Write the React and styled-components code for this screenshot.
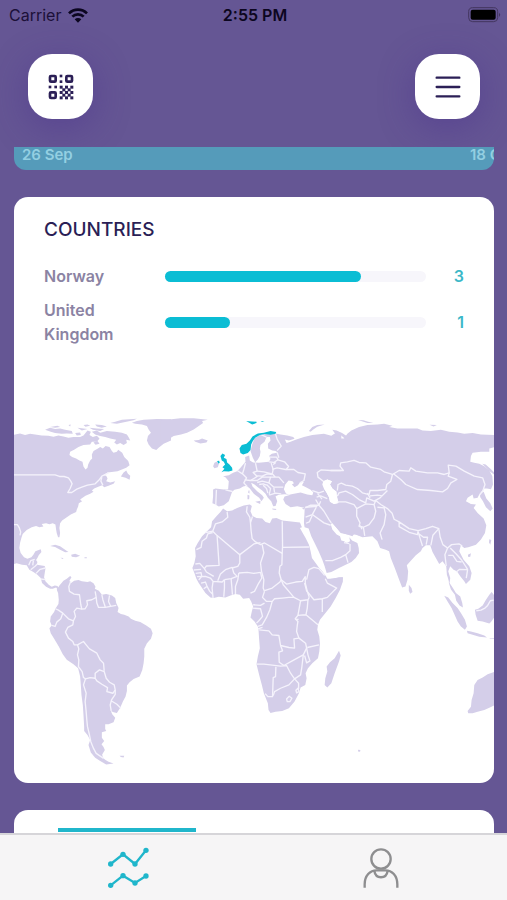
import styled, { createGlobalStyle } from 'styled-components';

const accent = '#0bbdd4';
const dark = '#2b1f56';
const muted = '#8b83a3';
const land = '#d4cee9';
const font = `Inter, 'Liberation Sans', sans-serif`;

const countries = [
  { name: 'Norway', visits: 3, share: 75 },
  { name: 'United Kingdom', visits: 1, share: 25 },
];

const regions = [
  {
    name: 'north-america',
    shift: 'translate(-42 0)',
    shapes: [
      'M42,101 60,97 75,102 90,98 105,100 125,103 145,104 160,107 175,103 190,106 205,110 220,108 240,108 250,103 262,88 272,92 268,102 278,108 290,104 298,112 290,122 275,122 270,130 250,132 235,138 222,146 210,152 208,162 216,168 228,172 238,178 247,182 250,196 256,205 262,200 264,190 270,178 276,172 275,160 280,150 292,143 300,138 308,142 316,135 328,138 335,150 340,155 350,152 354,146 366,155 372,168 384,180 388,192 378,200 365,205 352,210 340,212 322,214 310,222 318,224 322,232 318,240 330,244 345,240 340,248 325,254 312,258 306,252 296,256 282,262 275,268 280,272 270,278 256,284 244,292 240,296 246,300 236,306 234,316 230,325 228,332 212,340 200,348 186,358 180,366 178,380 180,395 178,408 174,408 170,396 168,385 166,370 158,366 148,369 138,366 125,368 130,376 118,378 108,374 95,378 80,386 68,398 64,410 60,425 58,440 62,455 72,468 82,472 94,468 100,460 106,450 122,444 124,452 116,462 112,470 108,476 112,482 110,490 120,492 134,494 136,502 134,515 132,528 136,540 146,550 155,556 164,552 172,554 180,566 176,568 168,558 158,562 150,562 138,556 126,545 122,530 112,520 100,512 88,505 80,492 66,490 50,486 42,488Z',
      'M395,65 410,60 430,56 470,54 512,55 512,118 490,128 475,140 468,147 455,142 445,130 440,118 443,105 452,95 445,85 440,75 425,70 405,68Z',
      'M275,92 290,88 300,95 320,90 345,92 365,95 380,100 386,110 390,118 378,116 380,126 370,132 360,126 350,130 342,124 348,116 330,112 315,108 300,105 285,100Z',
      'M135,86 150,80 165,84 180,82 195,86 215,90 218,98 200,97 185,98 165,96 152,92Z',
      'M150,78 172,74 180,78 165,80Z M205,72 212,70 210,76Z',
      'M225,96 240,94 242,102 230,103Z M232,80 250,82 262,84 245,88Z',
      'M250,72 262,70 270,74 256,77Z M268,80 290,82 312,84 300,90 278,86Z',
      'M285,70 305,72 320,76 305,80 290,76Z M330,66 345,62 365,56 410,53 400,58 375,63 350,68Z',
      'M280,124 292,120 298,128 286,131Z',
      'M362,226 370,214 378,208 383,218 390,224 388,236 376,230Z',
      'M150,434 165,430 180,435 195,445 205,452 195,453 180,445 165,437Z',
      'M213,460 225,457 240,463 228,468 215,466Z M253,468 260,468 260,471 253,471Z M181,469 190,470 188,473Z',
    ],
    borders: [
      'M42,221 165,221 178,226 192,226 205,230 212,240 216,248 210,262 203,274 215,274 230,264 245,258 262,252 285,248 298,235 305,225 325,215',
      'M305,228 302,240 308,252',
      'M42,370 52,370 58,380 62,392 60,402',
      'M86,492 92,478 104,474 M92,505 105,495 112,488 M108,516 120,504 136,500 M122,533 136,535 M100,478 98,492',
    ],
  },
  {
    name: 'south-america',
    shift: 'translate(-42 480)',
    shapes: [
      'M170,85 178,72 190,58 200,52 210,44 214,48 208,58 212,66 222,58 235,56 245,60 262,62 270,60 280,66 286,76 284,82 296,88 305,100 318,98 335,102 345,110 348,125 355,140 352,152 362,158 372,160 385,165 392,172 405,178 420,182 438,192 452,202 457,215 452,232 440,245 432,262 432,285 430,305 426,325 418,345 400,352 388,362 380,372 380,388 376,405 368,420 360,438 350,454 340,452 332,448 336,458 345,468 340,482 325,488 315,488 315,502 318,508 305,512 305,528 312,538 304,548 310,556 314,565 306,578 308,588 315,594 325,600 340,605 318,608 300,598 285,588 272,572 265,550 270,535 262,520 252,508 252,495 250,460 248,430 244,400 242,370 240,345 234,320 220,308 200,295 188,278 176,255 164,235 152,215 148,200 155,192 150,180 152,165 162,152 166,142 175,128 176,115 174,95Z',
      'M358,582 372,582 370,587 362,586Z',
    ],
    borders: [
      'M212,60 206,75 208,90 222,98 238,100 240,115 242,130 245,143 255,142 262,130 260,118 275,115 288,108 285,90',
      'M245,143 230,140 222,150 226,165 220,178 205,172 188,155 175,146 166,142',
      'M188,155 182,172 170,182 165,195 155,192',
      'M220,178 218,190 203,198 196,212 205,230 218,240 222,250 232,250 250,240 258,250 268,262 290,275 300,295 310,305 312,328',
      'M232,250 236,262 232,280 236,295 235,315 246,330 250,348 256,352 270,348 285,350',
      'M285,350 285,335 298,325 312,330 318,350 328,362 342,370 345,385 338,395 320,390 322,378 305,368 290,358Z',
      'M345,385 345,398 334,415 330,430 333,448 M334,418 350,428 362,440',
      'M256,352 250,370 258,395 255,420 258,450 260,475 262,495 268,520 272,540 280,560 288,575 310,590',
      'M288,108 290,125 295,138 315,138 348,132 M305,100 308,115 315,136 M328,102 325,120 332,136',
    ],
  },
  {
    name: 'africa',
    shift: 'translate(498 270)',
    shapes: [
      'M128,52 140,60 155,58 170,50 190,43 208,40 214,44 210,60 216,74 228,80 245,82 255,92 268,96 275,82 288,80 305,88 325,90 345,92 358,94 364,108 358,110 368,128 375,140 385,160 390,180 394,200 405,215 414,228 425,240 436,255 440,262 455,262 475,258 487,258 485,275 478,295 465,320 450,345 432,368 418,385 412,400 410,415 416,435 418,455 416,480 412,500 395,515 382,530 375,545 378,560 374,580 360,588 355,605 342,630 325,650 305,658 285,660 270,664 264,655 262,635 250,605 244,580 236,550 228,518 232,495 238,470 236,445 234,415 232,405 222,390 210,378 214,360 218,345 212,330 206,320 188,322 178,310 165,308 150,312 135,318 115,316 100,320 90,318 75,305 65,290 55,275 48,262 42,245 36,230 42,215 46,195 44,170 52,155 65,135 80,120 92,108 95,90 108,75 120,62Z',
      'M475,478 480,492 475,510 462,545 452,575 440,588 432,580 434,560 440,540 438,525 448,512 462,500Z',
      'M372,45 372,75 370,95 372,108 384,112 392,135 402,155 414,180 425,205 432,225 438,245 452,242 475,230 495,220 512,212 525,200 535,185 534,170 530,155 514,148 506,138 508,150 498,155 490,150 482,148 478,135 468,130 455,115 450,98 455,95 468,110 480,125 500,130 515,135 520,128 542,135 542,30 440,30Z',
    ],
    borders: [
      'M140,62 142,78 125,92 105,98 97,120 110,133 178,190 220,158 240,154',
      'M97,120 74,124 M97,124 82,128 78,140 65,150 62,168 48,175',
      'M110,133 116,222 78,224 72,232 58,216 45,218 M72,232 78,242 100,255',
      'M200,45 198,62 208,78 210,95 216,76 M210,95 212,120 215,142 225,152 240,160 252,155 305,186 306,165 305,90',
      'M306,168 385,167 M305,186 304,220 298,225 296,245 302,265',
      'M245,160 250,185 240,215 243,240 250,265 248,290 252,300',
      'M178,190 178,215 172,225 155,230 M175,245 200,243 220,246 240,243 244,260 232,280 222,300 210,305',
      'M175,245 172,265 165,285 165,308 M152,262 154,285 156,310 M132,265 132,290 130,316',
      'M112,268 120,248 135,235 155,228 160,245 170,255 152,262 132,265',
      'M98,320 95,290 98,270 125,272 132,265 M98,270 90,260 75,255 50,256 M62,275 75,272 80,285 70,292 M80,285 88,300 96,308',
      'M40,236 62,234 M46,246 62,244 64,255 55,266',
      'M252,298 275,290 298,272 302,265 308,280 325,300 340,318',
      'M252,300 246,318 258,330 275,330 282,322 305,320 325,318 340,318 360,328 382,325 386,318',
      'M218,340 240,342 252,335 M216,350 240,352 246,375 235,388 228,395',
      'M302,265 318,278 345,272 365,270 374,256 374,275 380,300 386,318',
      'M378,265 385,235 400,228 415,232 432,252 M372,275 378,298 400,325 425,322 440,318 468,290 440,275 434,262 M425,322 425,362',
      'M382,325 380,350 376,370 412,400 M360,328 355,355 352,372 376,370 M352,372 344,382 352,390 350,402 348,420 355,440',
      'M355,440 340,442 342,470 325,468 300,462 295,432 275,430 265,418 236,415',
      'M300,462 306,478 295,482 296,512 310,522 335,508 350,500 368,490 378,470 375,455 355,440',
      'M228,518 250,518 300,524 318,522 330,545 342,562 325,580 300,590 282,600 278,612',
      'M380,468 415,460 M378,470 382,490 388,508 378,514 372,492 M368,490 364,525 360,550 342,562 354,575 354,592',
      'M286,526 285,555 278,558 276,615 262,615 254,606 M275,330 268,355 258,378 245,400 232,405 M232,412 246,408',
      'M318,622 326,614 334,620 328,630 320,630Z M346,596 352,590 355,600 348,604Z M344,384 354,384',
      'M374,48 410,45 M408,46 395,70 375,78 M395,70 430,95 450,102 M405,25 415,42 430,60 445,85 452,95',
      'M434,208 455,208 480,198 495,190 508,178 508,158 M495,190 502,214 M376,96 386,92 395,72 M490,154 506,157',
    ],
  },
  {
    name: 'europe',
    shift: 'translate(438 0)',
    shapes: [
      'M345,97 360,100 380,103 398,108 402,113 385,118 373,115 378,126 390,122 405,116 430,108 455,102 490,98 512,104 530,92 542,100 542,362 430,362 434,320 410,315 390,318 375,308 368,295 372,286 390,281 372,279 355,281 345,285 350,300 345,314 338,315 332,300 322,290 315,278 305,268 292,258 282,250 272,245 276,256 290,270 305,282 310,290 303,300 296,290 280,278 268,262 258,254 248,256 238,262 222,266 215,272 210,286 205,300 190,312 175,316 165,310 156,306 158,285 158,265 165,262 190,265 203,264 205,240 195,228 188,225 205,222 218,215 230,210 240,200 250,188 255,182 254,168 266,163 268,178 278,184 295,185 310,183 325,182 330,174 326,164 334,158 352,154 345,150 335,148 323,142 322,128 330,118 328,108 318,108 312,122 300,132 298,142 300,152 298,165 292,175 284,183 277,170 270,150 275,130 282,112 300,100 320,96Z',
      'M0,58 20,56 60,52 100,52 142,56 125,60 128,66 115,75 100,85 80,95 62,100 40,105 28,112 15,122 0,130Z',
      'M100,118 115,117 125,112 142,118 138,124 120,127 105,122Z',
      'M162,185 170,181 175,190 172,198 162,201 158,195Z',
      'M284,302 300,299 299,308Z M261,281 267,283 266,294 261,294Z M264,268 267,268 267,277 263,275Z M335,322 348,323 345,326 336,325Z M424,322 434,319 430,325Z',
      'M445,90 455,78 470,72 492,70 470,77 458,85 450,92Z',
    ],
    waters: [
      'M374,250 384,238 396,240 400,246 394,250 402,258 412,252 418,244 430,242 424,252 436,258 450,266 458,274 455,282 440,280 420,274 400,278 385,281 376,277 370,264Z',
      'M488,240 500,235 514,240 508,250 515,262 526,272 528,282 532,305 520,308 508,302 505,288 498,275 490,262 485,250Z',
    ],
    borders: [
      'M255,186 250,205 246,218 258,230 250,245 260,256 M285,186 290,210 278,214 290,226 270,238 252,236',
      'M332,186 338,205 335,218 310,212 290,210 M290,224 305,225 320,218 335,220 M270,238 290,238 305,228 330,228 325,245 305,240 290,244',
      'M230,208 246,218 M195,266 216,271 M168,266 166,312',
      'M330,228 355,228 370,245 M325,245 340,258 368,258 M335,205 350,200 375,205 400,205 412,214 434,218 430,238 418,245 M335,218 345,228',
      'M325,182 340,184 352,176 372,182 384,196 376,206 M328,168 348,168 354,178 M350,154 355,170 M338,190 346,184',
      'M345,99 350,115 362,135 350,148 M318,108 300,100 M318,250 330,262 326,280 M308,252 318,262 322,276 M326,282 345,276 362,278 M340,260 342,274 M296,250 308,248 318,252',
      'M455,268 475,275 490,270 M468,288 480,284 500,292 M470,276 484,294 M480,300 475,312 450,312 434,320',
      'M488,240 472,228 470,214 482,206 510,208 540,208',
    ],
    active: [
      'M180,165 186,157 194,162 190,170 198,174 200,184 207,190 215,200 216,208 205,211 190,210 183,213 192,203 186,198 194,190 190,182 184,178Z',
      'M170,180 176,179 178,185 174,188Z',
      'M237,142 244,132 258,128 268,118 276,106 292,97 310,95 330,90 347,93 345,98 330,101 312,99 298,102 284,110 277,120 272,130 270,147 262,156 248,160 240,156Z',
      'M257,60 275,61 288,62 288,66 275,70 266,65Z M300,60 312,61 305,63Z',
    ],
  },
  {
    name: 'asia',
    shift: 'translate(948 0)',
    shapes: [
      'M0,106 20,112 40,112 50,98 62,88 85,78 110,72 140,70 160,68 185,74 175,78 200,82 230,82 260,82 275,88 300,90 330,86 355,92 380,94 400,98 425,96 450,100 492,102 492,138 475,142 475,152 450,152 425,155 420,165 418,182 430,185 445,188 460,195 475,208 484,225 486,250 480,264 468,262 460,262 446,278 440,290 428,292 425,280 410,290 405,300 420,308 435,310 428,320 440,335 458,352 466,372 462,395 450,415 435,430 412,438 400,440 390,432 385,450 398,475 415,495 422,515 418,535 405,548 400,540 388,525 378,510 368,505 358,495 352,510 358,530 356,545 348,520 346,495 335,480 325,488 315,470 305,452 298,432 285,432 275,440 270,450 255,462 240,478 228,492 232,510 230,535 224,555 214,558 205,535 192,500 180,470 175,450 165,445 148,440 140,420 125,405 95,408 75,400 50,400 30,393 5,365 0,362Z',
      'M446,278 458,272 466,292 478,306 485,322 478,330 465,318 456,300 448,288Z',
      'M5,86 18,88 34,96 48,105 42,112 30,102 12,96Z M82,57 98,58 112,62 128,66 110,66Z M296,71 318,72 308,76Z',
      'M454,188 464,190 480,204 492,216 492,222 476,210Z M411,460 420,456 418,466 412,467Z M475,414 481,416 478,430 474,424Z',
      'M0,532 36,528 36,542 20,560 0,566Z',
    ],
    waters: ['M-22,240 -10,235 4,240 -2,250 5,262 18,272 18,282 24,305 10,308 -2,302 -5,288 -12,275 -20,262Z'],
    borders: [
      'M0,208 38,208 28,195 30,185 50,182 70,178 85,184 105,185 120,198 150,205 160,212 185,220 205,208 235,210 240,200 255,210 290,215 320,215 340,220 355,215 352,192 375,195 400,210 430,225 455,230 462,250 456,268 446,282',
      'M188,218 210,235 225,250 260,265 300,268 335,272 350,262 360,245 378,235 352,225 355,215',
      'M20,268 22,250 32,246 45,252 65,255 80,262 95,275 115,280 118,268 140,268 165,265 168,250 180,240 185,220',
      'M20,285 25,275 45,270 65,280 85,295 105,305 108,290 130,300 148,290 170,268 M118,284 140,282 155,284 M110,276 118,290',
      'M20,302 45,302 70,310 78,322 105,308 130,310 135,298 M78,322 78,345 88,365 85,375 98,378 115,370 130,350 135,330 130,310 M98,378 102,404 M86,370 94,384',
      'M140,318 160,320 165,340 160,370 148,395 154,415 M135,298 150,310 170,322 184,336 190,354 205,362',
      'M205,362 235,382 262,388 260,400 235,393 205,376Z M262,388 285,382 305,375 324,382 306,402 300,432',
      'M262,392 268,412 275,434 M265,398 278,408 290,408 286,430 M324,384 328,408 336,430 350,440 342,460 346,494',
      'M350,440 362,430 385,428 394,434 M358,440 376,458 392,476 410,504 M352,462 366,462 378,480 392,482 M376,512 386,504 410,505 406,530',
    ],
  },
  {
    name: 'oceania',
    shift: 'translate(978 480)',
    shapes: [
      'M204,70 212,80 215,92 208,97 204,88Z',
      'M310,103 322,108 335,125 350,140 360,155 372,175 378,195 372,205 360,195 350,180 340,158 332,140 320,120Z',
      'M323,40 326,65 336,80 345,95 358,105 364,125 366,138 356,132 346,118 342,100 330,84 324,66Z',
      'M378,208 390,210 410,215 430,222 438,228 415,226 395,220 380,215Z M446,230 462,230 462,233 446,232Z',
      'M402,145 412,142 425,132 435,115 445,100 452,92 462,105 462,165 450,182 445,186 425,180 410,178 404,160Z',
      'M462,330 440,338 425,348 410,355 400,370 398,395 392,415 390,435 380,448 382,455 395,455 410,450 430,445 445,438 462,430Z',
      'M52,564 59,565 58,570 52,569Z',
    ],
    borders: ['M406,148 420,146 432,140 440,132 448,118 458,116'],
  },
];

const checker = [0, 1, 2, 3, 4].flatMap(row =>
  [0, 1, 2, 3, 4].filter(col => (row + col) % 2 === 0).map(col => ({ row, col }))
);

const WifiIcon = () => (
  <svg width="20" height="15" viewBox="0 0 60 45" aria-hidden="true">
    <g fill="none" stroke="#0c0620" strokeWidth="8">
      <path d="M3 16 C18 1 42 1 57 16" />
      <path d="M13 26 C22 17 38 17 47 26" />
    </g>
    <path d="M30 44 L20 34 C26 29 34 29 40 34 Z" fill="#0c0620" />
  </svg>
);

const BatteryIcon = () => (
  <svg width="33" height="16" viewBox="0 0 99 48" aria-hidden="true">
    <rect x="2" y="2" width="87" height="42" rx="12" fill="none" stroke="#43365f" strokeWidth="3" />
    <rect x="8" y="8" width="75" height="30" rx="6" fill="#000" />
    <path d="M93 17 q7 6 0 13z" fill="#43365f" />
  </svg>
);

const QrIcon = () => (
  <svg width="26" height="26" viewBox="0 0 78 78" fill={dark} aria-hidden="true">
    <g fill="none" stroke={dark} strokeWidth="8">
      <rect x="6" y="6" width="17" height="17" rx="3" />
      <rect x="55" y="6" width="17" height="17" rx="3" />
      <rect x="6" y="55" width="17" height="17" rx="3" />
    </g>
    <rect x="35" y="2" width="8" height="8" />
    <rect x="35" y="19" width="8" height="8" />
    <rect x="2" y="35" width="8" height="8" />
    <rect x="19" y="35" width="8" height="8" />
    {checker.map(({ row, col }) => (
      <rect key={`${row}-${col}`} x={35 + col * 8} y={35 + row * 8} width="9" height="9" />
    ))}
  </svg>
);

const MenuIcon = () => (
  <svg width="26" height="26" viewBox="0 0 78 78" aria-hidden="true">
    <path
      d="M5 11 H73 M5 39 H73 M5 67 H73"
      stroke={dark}
      strokeWidth="7"
      strokeLinecap="round"
    />
  </svg>
);

const ChartsIcon = () => (
  <svg width="42" height="42" viewBox="0 0 126 126" fill="#20b6cb" aria-hidden="true">
    <g fill="none" stroke="#20b6cb" strokeWidth="7">
      <path d="M11 51 L48 22 L84 51 L117 10" />
      <path d="M11 115 L48 86 L84 108 L117 87" />
    </g>
    <circle cx="11" cy="51" r="8" />
    <circle cx="48" cy="22" r="8" />
    <circle cx="84" cy="51" r="8" />
    <circle cx="117" cy="10" r="8" />
    <circle cx="11" cy="115" r="8" />
    <circle cx="48" cy="86" r="8" />
    <circle cx="84" cy="108" r="8" />
    <circle cx="117" cy="87" r="8" />
  </svg>
);

const ProfileIcon = () => (
  <svg width="42" height="42" viewBox="0 0 126 126" aria-hidden="true">
    <g fill="none" stroke="#8e8e90" strokeWidth="7">
      <circle cx="63" cy="36" r="29" />
      <path d="M14 122 V112 C14 86 30 70 50 70 H76 C96 70 112 86 112 112 V122" />
      <path d="M43 72 C47 97 79 97 83 72" />
    </g>
  </svg>
);

const WorldMap = () => (
  <Map viewBox="0 0 1437 1143" role="img" aria-label="Visits by country">
    {regions.map(({ name, shift, shapes }) => (
      <g key={name} transform={shift} fill={land}>
        {shapes.map(d => (
          <path key={d} d={d} />
        ))}
      </g>
    ))}
    {regions.map(({ name, shift, waters = [], borders, active = [] }) => (
      <g key={name} transform={shift}>
        {waters.map(d => (
          <path key={d} d={d} fill="#fff" />
        ))}
        {borders.map(d => (
          <path key={d} d={d} fill="none" stroke="#f5f3fc" strokeWidth="4" strokeLinejoin="round" />
        ))}
        {active.map(d => (
          <path key={d} d={d} fill={accent} />
        ))}
      </g>
    ))}
  </Map>
);

const App = () => {
  return (
    <>
      <GlobalStyle />
      <Screen>
        <StatusBar>
          <Carrier>
            Carrier <WifiIcon />
          </Carrier>
          <Time>2:55 PM</Time>
          <Battery>
            <BatteryIcon />
          </Battery>
        </StatusBar>
        <Header>
          <IconButton type="button" aria-label="QR code">
            <QrIcon />
          </IconButton>
          <IconButton type="button" aria-label="Menu">
            <MenuIcon />
          </IconButton>
        </Header>
        <Content>
          <DateStrip>
            <DateLabel>26 Sep</DateLabel>
            <LastDate>18 Oct</LastDate>
          </DateStrip>
          <Card>
            <Title>COUNTRIES</Title>
            <List>
              {countries.map(({ name, visits, share }) => (
                <Row key={name}>
                  <Name>{name}</Name>
                  <Track>
                    <Fill style={{ width: `${share}%` }} />
                  </Track>
                  <Value>{visits}</Value>
                </Row>
              ))}
            </List>
            <WorldMap />
          </Card>
          <NextCard>
            <Indicator />
          </NextCard>
        </Content>
        <TabBar>
          <Tab type="button" aria-label="Statistics">
            <ChartsIcon />
          </Tab>
          <Tab type="button" aria-label="Profile">
            <ProfileIcon />
          </Tab>
        </TabBar>
      </Screen>
    </>
  );
};

export default App;

const GlobalStyle = createGlobalStyle`
  *,
  *::before,
  *::after {
    box-sizing: border-box;
  }

  body {
    margin: 0;
    font-family: ${font};
    background-color: #655694;
  }

  h2,
  ul {
    margin: 0;
    padding: 0;
    list-style: none;
  }

  svg {
    display: block;
  }
`;

const Screen = styled.div`
  display: flex;
  flex-direction: column;
  height: 100vh;
  overflow: hidden;
  background-color: #655694;
`;

const StatusBar = styled.div`
  display: grid;
  grid-template-columns: 1fr auto 1fr;
  align-items: center;
  height: 30px;
  padding: 0 6px 0 9px;
  font-size: 16px;
  line-height: 20px;
  color: #1c1038;
`;

const Carrier = styled.span`
  display: flex;
  align-items: center;
  gap: 7px;
`;

const Time = styled.span`
  font-weight: 600;
  color: #0c0620;
`;

const Battery = styled.span`
  justify-self: end;
`;

const Header = styled.header`
  display: flex;
  justify-content: space-between;
  padding: 24px 27px 28px 28px;
`;

const IconButton = styled.button`
  display: flex;
  align-items: center;
  justify-content: center;
  width: 65px;
  height: 65px;
  padding: 0;
  border: none;
  border-radius: 24px;
  background-color: #fff;
  box-shadow: 0 8px 36px rgba(70, 45, 140, 0.45);
`;

const Content = styled.main`
  flex: 1;
  min-height: 0;
  padding: 0 13px 0 14px;
  overflow-y: auto;
  scrollbar-width: none;
`;

const DateStrip = styled.div`
  display: flex;
  justify-content: space-between;
  height: 23px;
  padding-left: 8px;
  border-radius: 0 0 12px 12px;
  overflow: hidden;
  background-color: #559bba;
`;

const DateLabel = styled.span`
  font-size: 15px;
  font-weight: 600;
  line-height: 16px;
  color: #93cfe2;
  white-space: nowrap;
`;

const LastDate = styled(DateLabel)`
  width: 24px;
`;

const Card = styled.section`
  margin-top: 27px;
  border-radius: 14px;
  overflow: hidden;
  background-color: #fff;
`;

const Title = styled.h2`
  padding: 21px 30px 0;
  font-size: 19px;
  font-weight: 500;
  line-height: 24px;
  color: ${dark};
`;

const List = styled.ul`
  display: flex;
  flex-direction: column;
  gap: 10px;
  padding: 22px 30px 55px;
`;

const Row = styled.li`
  display: grid;
  grid-template-columns: 121px 1fr 38px;
  align-items: center;
  font-size: 16px;
  font-weight: 600;
  line-height: 24px;
`;

const Name = styled.span`
  padding-right: 24px;
  color: ${muted};
`;

const Track = styled.div`
  height: 11px;
  border-radius: 6px;
  background-color: #f7f6fb;
`;

const Fill = styled.div`
  height: 100%;
  border-radius: 6px;
  background-color: ${accent};
`;

const Value = styled.span`
  text-align: right;
  color: #3bb8c8;
`;

const Map = styled.svg`
  width: 100%;
  height: auto;
`;

const NextCard = styled(Card)`
  min-height: 200px;
  padding: 18px 30px 18px 44px;
`;

const Indicator = styled.div`
  width: 34%;
  height: 4px;
  background-color: #20b6cb;
`;

const TabBar = styled.nav`
  display: flex;
  height: 67px;
  padding-left: 2px;
  border-top: 2px solid #d6d5d9;
  background-color: #f6f5f6;
`;

const Tab = styled.button`
  display: flex;
  flex: 1;
  align-items: center;
  justify-content: center;
  padding: 0;
  border: none;
  background: none;
`;
